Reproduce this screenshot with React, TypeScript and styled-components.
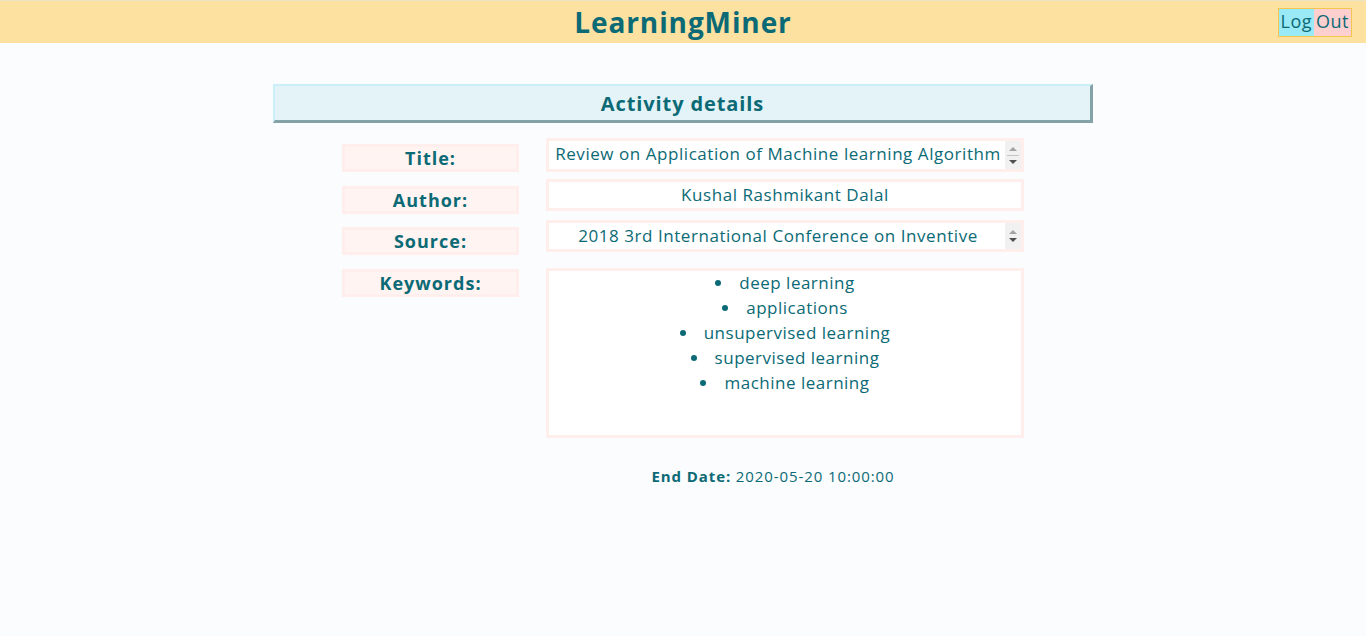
import React from 'react';
import styled, { createGlobalStyle } from 'styled-components';

const teal = '#0b6a75';

const GlobalStyle = createGlobalStyle`
  html, body {
    margin: 0;
    padding: 0;
    background: #fbfcfe;
    font-family: "Open Sans", "Liberation Sans", sans-serif;
    color: ${teal};
  }
`;

const Header = styled.header`
  position: relative;
  height: 43px;
  box-sizing: border-box;
  border-top: 1px solid #ece3c6;
  background: #fce1a0;
  display: flex;
  align-items: center;
  justify-content: center;
`;

const Brand = styled.h1`
  margin: 0;
  font-size: 28px;
  font-weight: 700;
  letter-spacing: 0.9px;
  color: ${teal};
`;

const LogOut = styled.button`
  position: absolute;
  right: 14px;
  top: 7px;
  display: flex;
  padding: 0;
  height: 29px;
  border: 1px solid #f3c64e;
  background: none;
  font-family: inherit;
  font-size: 18px;
  font-weight: 500;
  letter-spacing: 0.5px;
  color: ${teal};
  cursor: pointer;
`;

const Half = styled.span<{ $bg: string }>`
  display: flex;
  align-items: center;
  padding: 0 2px 3px;
  background: ${(p) => p.$bg};
`;

const Main = styled.main`
  width: 820px;
  margin: 41px auto 0;
`;

const SectionTitle = styled.h2`
  margin: 0;
  height: 39px;
  box-sizing: border-box;
  border-style: solid;
  border-width: 2px 3px 3px 2px;
  border-color: #cbeff9 #84a3a8 #84a3a8 #cbeff9;
  background: #e3f3f7;
  display: flex;
  align-items: center;
  justify-content: center;
  font-size: 20px;
  font-weight: 700;
  letter-spacing: 0.9px;
  color: ${teal};
`;

const Form = styled.div`
  width: 682px;
  margin: 15px auto 0;
  display: flex;
  flex-direction: column;
`;

const Row = styled.div<{ $gap: number }>`
  display: flex;
  align-items: flex-start;
  gap: 27px;
  margin-top: ${(p) => p.$gap}px;
`;

const Label = styled.div<{ $offset: number }>`
  width: 177px;
  height: 28px;
  flex: none;
  box-sizing: border-box;
  margin-top: ${(p) => p.$offset}px;
  padding-bottom: 1px;
  border: 3px solid #ffeeeb;
  background: #fff4f2;
  display: flex;
  align-items: center;
  justify-content: center;
  font-size: 18px;
  font-weight: 700;
  letter-spacing: 1px;
`;

const FieldWrap = styled.div`
  position: relative;
  display: flex;
`;

const Field = styled.textarea<{ $h: number; $scroll?: boolean }>`
  width: 478px;
  height: ${(p) => p.$h}px;
  box-sizing: border-box;
  border: 3px solid #ffeeeb;
  background: #fff;
  padding: 0 ${(p) => (p.$scroll ? 16 : 2)}px 0 2px;
  resize: none;
  overflow: hidden;
  text-align: center;
  font-family: inherit;
  font-size: 17px;
  font-weight: 500;
  letter-spacing: 0.55px;
  line-height: 25px;
  color: ${teal};
  outline: none;
`;

const Spinner = styled.div`
  position: absolute;
  top: 3px;
  right: 3px;
  bottom: 3px;
  width: 16px;
  background: #f1f1f1;
  display: flex;
  flex-direction: column;
  align-items: center;
  justify-content: center;
  gap: 4px;
`;

const Arrow = styled.span<{ $up?: boolean }>`
  width: 0;
  height: 0;
  border-left: 4px solid transparent;
  border-right: 4px solid transparent;
  ${(p) =>
    p.$up
      ? 'border-bottom: 4px solid #a3a3a3;'
      : 'border-top: 4px solid #505050;'}
`;

const Thumb = styled.span`
  width: 12px;
  height: 1px;
  background: #c4c4c4;
`;

const KeywordBox = styled.div`
  width: 478px;
  height: 170px;
  box-sizing: border-box;
  border: 3px solid #ffeeeb;
  background: #fff;
`;

const KeywordList = styled.ul`
  margin: -1px 0 0;
  padding: 0;
  list-style: disc inside;
  text-align: center;
  font-size: 17px;
  font-weight: 500;
  letter-spacing: 0.5px;
  line-height: 25px;
`;

const EndDate = styled.p`
  margin: 28px 0 0 180px;
  text-align: center;
  font-size: 15px;
  letter-spacing: 0.9px;

  b {
    font-weight: 700;
  }
`;

const keywords = [
  'deep learning',
  'applications',
  'unsupervised learning',
  'supervised learning',
  'machine learning',
];

export default function App() {
  return (
    <>
      <GlobalStyle />
      <Header>
        <Brand>LearningMiner</Brand>
        <LogOut>
          <Half $bg="#9ae9f6">Log</Half>
          <Half $bg="#fecfcf">Out</Half>
        </LogOut>
      </Header>
      <Main>
        <SectionTitle>Activity details</SectionTitle>
        <Form>
          <Row $gap={0}>
            <Label $offset={6}>Title:</Label>
            <FieldWrap>
              <Field
                $h={34}
                $scroll
                readOnly
                value="Review on Application of Machine learning Algorithm for Data Science"
              />
              <Spinner>
                <Arrow $up />
                <Thumb />
                <Arrow />
              </Spinner>
            </FieldWrap>
          </Row>
          <Row $gap={7}>
            <Label $offset={7}>Author:</Label>
            <FieldWrap>
              <Field $h={32} readOnly value="Kushal Rashmikant Dalal" />
            </FieldWrap>
          </Row>
          <Row $gap={6}>
            <Label $offset={7}>Source:</Label>
            <FieldWrap>
              <Field
                $h={32}
                $scroll
                readOnly
                value="2018 3rd International Conference on Inventive Communication and Computational Technologies (ICICCT)"
              />
              <Spinner>
                <Arrow $up />
                <Arrow />
              </Spinner>
            </FieldWrap>
          </Row>
          <Row $gap={13}>
            <Label $offset={1}>Keywords:</Label>
            <KeywordBox>
              <KeywordList>
                {keywords.map((k) => (
                  <li key={k}>{k}</li>
                ))}
              </KeywordList>
            </KeywordBox>
          </Row>
          <EndDate>
            <b>End Date:</b> 2020-05-20 10:00:00
          </EndDate>
        </Form>
      </Main>
    </>
  );
}
